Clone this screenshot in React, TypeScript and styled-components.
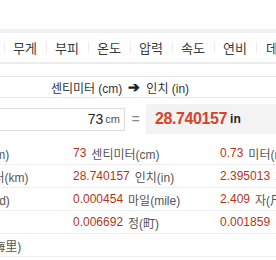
import React from 'react';
import styled, { createGlobalStyle } from 'styled-components';

const GlobalStyle = createGlobalStyle`
  html, body {
    margin: 0;
    padding: 0;
    background: #fff;
  }
  body {
    font-family: "Liberation Sans", "Noto Sans CJK KR", sans-serif;
    color: #333;
  }
`;

const Viewport = styled.div`
  width: 276px;
  height: 260px;
  overflow: hidden;
  padding-top: 29px;
  box-sizing: border-box;
`;

const TabBar = styled.div`
  display: flex;
  height: 29px;
  border-top: 4px solid #f1f1f1;
  border-bottom: 2px solid #ececec;
  margin-left: -38px;
  width: 380px;
`;

const Tab = styled.div<{ $wide?: boolean }>`
  position: relative;
  flex: 0 0 ${(p) => (p.$wide ? 'auto' : '42px')};
  padding-left: ${(p) => (p.$wide ? '10px' : '0')};
  display: flex;
  align-items: center;
  justify-content: ${(p) => (p.$wide ? 'flex-start' : 'center')};
  font-size: 13px;
  color: #3a3a3a;
  white-space: nowrap;

  &::before {
    content: "";
    position: absolute;
    left: 0;
    top: 9px;
    width: 1px;
    height: 11px;
    background: #ececec;
  }
`;

const TitleRow = styled.div`
  margin-top: 12px;
  height: 20px;
  border-top: 1px solid #e6e6e6;
  border-bottom: 1px solid #e6e6e6;
  display: flex;
  align-items: center;
  justify-content: center;
  padding-right: 36px;
  font-size: 12px;
  color: #333;
  white-space: nowrap;
`;

const Arrow = styled.span`
  font-weight: bold;
  font-size: 14px;
  margin: 0 6px;
  color: #222;
`;

const InputRow = styled.div`
  display: flex;
  align-items: center;
  height: 30px;
  margin-top: 6px;
`;

const InputBox = styled.div`
  flex: 0 0 145px;
  margin-left: -20px;
  height: 23px;
  box-sizing: border-box;
  border: 1px solid #dcdcdc;
  display: flex;
  align-items: center;
  justify-content: flex-end;
  padding-right: 4px;
`;

const InputValue = styled.span`
  font-size: 14px;
  color: #222;
`;

const InputUnit = styled.span`
  font-size: 11px;
  color: #555;
  margin-left: 2px;
`;

const Equals = styled.div`
  flex: 0 0 21px;
  text-align: center;
  font-size: 14px;
  color: #888;
`;

const ResultBox = styled.div`
  flex: 1;
  height: 30px;
  background: #f3f3f3;
  display: flex;
  align-items: center;
  padding-left: 9px;
  white-space: nowrap;
`;

const ResultValue = styled.span`
  font-size: 16px;
  font-weight: bold;
  letter-spacing: -0.4px;
  color: #d6432a;
`;

const ResultUnit = styled.span`
  font-size: 12px;
  font-weight: bold;
  color: #222;
  margin-left: 3px;
`;

const Table = styled.div`
  margin-top: 8px;
  margin-left: -88px;
  display: grid;
  grid-template-columns: 161px 147px 147px;
  width: 455px;
`;

const Cell = styled.div`
  height: 22px;
  border-bottom: 1px solid #eeeeee;
  display: flex;
  align-items: center;
  white-space: nowrap;
  font-size: 12px;
`;

const Value = styled.span`
  color: #b2361d;
  margin-right: 5px;
`;

const Label = styled.span`
  color: #555;
`;

const Footer = styled.div`
  margin-top: 12px;
  height: 10px;
  background: #f0f0f0;
`;

const tabs = ['길이', '무게', '부피', '온도', '압력', '속도', '연비', '데이터양'];

const results: [string, string][] = [
  ['730', '밀리미터(mm)'],
  ['73', '센티미터(cm)'],
  ['0.73', '미터(m)'],
  ['0.00073', '킬로미터(km)'],
  ['28.740157', '인치(in)'],
  ['2.395013', '피트(ft)'],
  ['0.798337', '야드(yd)'],
  ['0.000454', '마일(mile)'],
  ['2.409', '자(尺)'],
  ['0.401503', '간(間)'],
  ['0.006692', '정(町)'],
  ['0.001859', '리(里)'],
  ['0.000394', '해리(海里)'],
  ['', ''],
  ['', ''],
];

export default function App() {
  return (
    <Viewport>
      <GlobalStyle />
      <TabBar>
        {tabs.map((t, i) => (
          <Tab key={t} $wide={i === tabs.length - 1}>{t}</Tab>
        ))}
      </TabBar>
      <TitleRow>
        센티미터 (cm)<Arrow>➔</Arrow>인치 (in)
      </TitleRow>
      <InputRow>
        <InputBox>
          <InputValue>73</InputValue>
          <InputUnit>cm</InputUnit>
        </InputBox>
        <Equals>=</Equals>
        <ResultBox>
          <ResultValue>28.740157</ResultValue>
          <ResultUnit>in</ResultUnit>
        </ResultBox>
      </InputRow>
      <Table>
        {results.map(([v, l], i) => (
          <Cell key={i}>
            {v && <Value>{v}</Value>}
            <Label>{l}</Label>
          </Cell>
        ))}
      </Table>
      <Footer />
    </Viewport>
  );
}
